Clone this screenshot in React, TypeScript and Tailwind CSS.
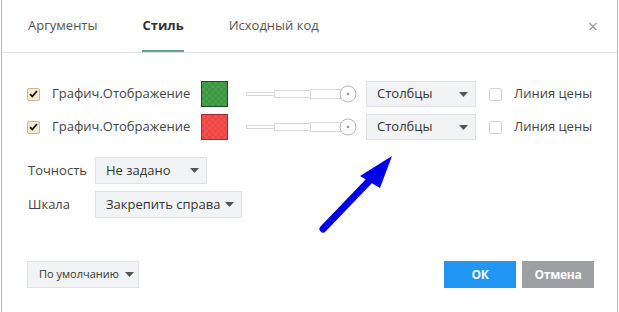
import React from "react";

const font = { fontFamily: '"Open Sans", "Noto Sans", sans-serif' };

function Caret({ className = "" }: { className?: string }) {
  return (
    <svg width="9" height="5" viewBox="0 0 9 5" className={`shrink-0 ${className}`}>
      <path d="M0 0h9L4.5 5z" fill="#555" />
    </svg>
  );
}

function Check({ checked }: { checked: boolean }) {
  return checked ? (
    <span className="flex h-[13px] w-[13px] shrink-0 items-center justify-center rounded-[2px] border border-[#cbb893] bg-[#f6ead2]">
      <svg width="9" height="8" viewBox="0 0 9 8">
        <path d="M1 4.2l2.3 2.3L8 1" fill="none" stroke="#111" strokeWidth="1.8" />
      </svg>
    </span>
  ) : (
    <span className="block h-[13px] w-[13px] shrink-0 rounded-[2px] border border-[#d4d4d4] bg-white" />
  );
}

function Slider() {
  return (
    <svg width="112" height="18" viewBox="0 0 112 18" className="block shrink-0">
      <rect x="0.5" y="7.5" width="28" height="3" fill="#fff" stroke="#d9d9d9" />
      <rect x="28.5" y="5.5" width="36" height="7" fill="#fff" stroke="#d9d9d9" />
      <rect x="64.5" y="4.5" width="32" height="9" fill="#fff" stroke="#d9d9d9" />
      <circle cx="102" cy="9" r="8" fill="#fff" stroke="#b5b5b5" />
      <circle cx="102" cy="9" r="1.3" fill="#999" />
    </svg>
  );
}

function Swatch({ border, a, b }: { border: string; a: string; b: string }) {
  return (
    <span
      className={`block h-[26px] w-[27px] shrink-0 border ${border}`}
      style={{
        backgroundImage: `repeating-conic-gradient(${a} 0 25%, ${b} 0 50%)`,
        backgroundSize: "6px 6px",
      }}
    />
  );
}

function Row({ border, a, b }: { border: string; a: string; b: string }) {
  return (
    <div className="flex h-[26px] items-center whitespace-nowrap">
      <Check checked />
      <span className="ml-[12px] w-[149px] shrink-0 text-[13px] text-[#444]">Графич.Отображение</span>
      <Swatch border={border} a={a} b={b} />
      <span className="ml-[18px]">
        <Slider />
      </span>
      <div className="ml-[8px] flex h-[26px] w-[110px] shrink-0 items-center justify-between border border-[#dfe1e5] bg-[#f2f3f5] pl-[10px] pr-[7px] text-[13px] text-[#333]">
        Столбцы
        <Caret />
      </div>
      <span className="ml-[13px]">
        <Check checked={false} />
      </span>
      <span className="ml-[12px] text-[13px] text-[#444]">Линия цены</span>
    </div>
  );
}

function Select({ label, w }: { label: string; w: string }) {
  return (
    <div className={`flex h-[27px] ${w} items-center justify-between whitespace-nowrap border border-[#dfe1e5] bg-[#f2f3f5] pl-[10px] pr-[7px] text-[13px] text-[#333]`}>
      {label}
      <Caret />
    </div>
  );
}

export default function App() {
  return (
    <div className="h-[312px] w-[619px] bg-white pl-px" style={font}>
      <div className="relative flex h-full w-[617px] flex-col border-x border-[#b9b9b9]">
        <div className="flex h-[53px] items-end border-b border-[#e2e2e2] pl-[26px] text-[13px]">
          <div className="pb-[17px] text-[#555]">Аргументы</div>
          <div className="ml-[45px] border-b-2 border-[#63a68f] pb-[15px] font-bold text-[#333]">Стиль</div>
          <div className="ml-[45px] pb-[17px] text-[#555]">Исходный код</div>
          <div className="ml-auto mr-[19px] self-center text-[18px] text-[#999]">×</div>
        </div>

        <div className="flex flex-col gap-[7px] pl-[25px] pt-[28px]">
          <Row border="border-[#1e4d20]" a="#3d963f" b="#46a04a" />
          <Row border="border-[#a52a2a]" a="#f04444" b="#f34f4f" />
        </div>

        <div className="mt-[17px] flex flex-col gap-[7px] pl-[26px]">
          <div className="flex items-center">
            <span className="w-[67px] text-[13px] text-[#444]">Точность</span>
            <Select label="Не задано" w="w-[112px]" />
          </div>
          <div className="flex items-center">
            <span className="w-[67px] text-[13px] text-[#444]">Шкала</span>
            <Select label="Закрепить справа" w="w-[147px]" />
          </div>
        </div>

        <div className="mt-auto mb-[24px] flex items-center pl-[25px] pr-[23px]">
          <div className="flex h-[27px] w-[112px] items-center gap-[6px] whitespace-nowrap border border-[#dfe1e5] bg-[#f2f3f5] pl-[11px] text-[11px] text-[#333]">
            По умолчанию
            <Caret />
          </div>
          <button className="ml-auto h-[27px] w-[72px] bg-[#2196f3] text-[12px] font-bold tracking-tight text-white">
            ОК
          </button>
          <button className="ml-[6px] h-[27px] w-[72px] bg-[#9d9fa3] text-[12px] font-bold tracking-tight text-white">
            Отмена
          </button>
        </div>

        <svg className="pointer-events-none absolute left-0 top-0" width="617" height="312">
          <line x1="321" y1="229" x2="368" y2="180" stroke="#0000e8" strokeWidth="7" strokeLinecap="round" />
          <path d="M390 156 L358 176 L378 188 Z" fill="#0000e8" />
        </svg>
      </div>
    </div>
  );
}
